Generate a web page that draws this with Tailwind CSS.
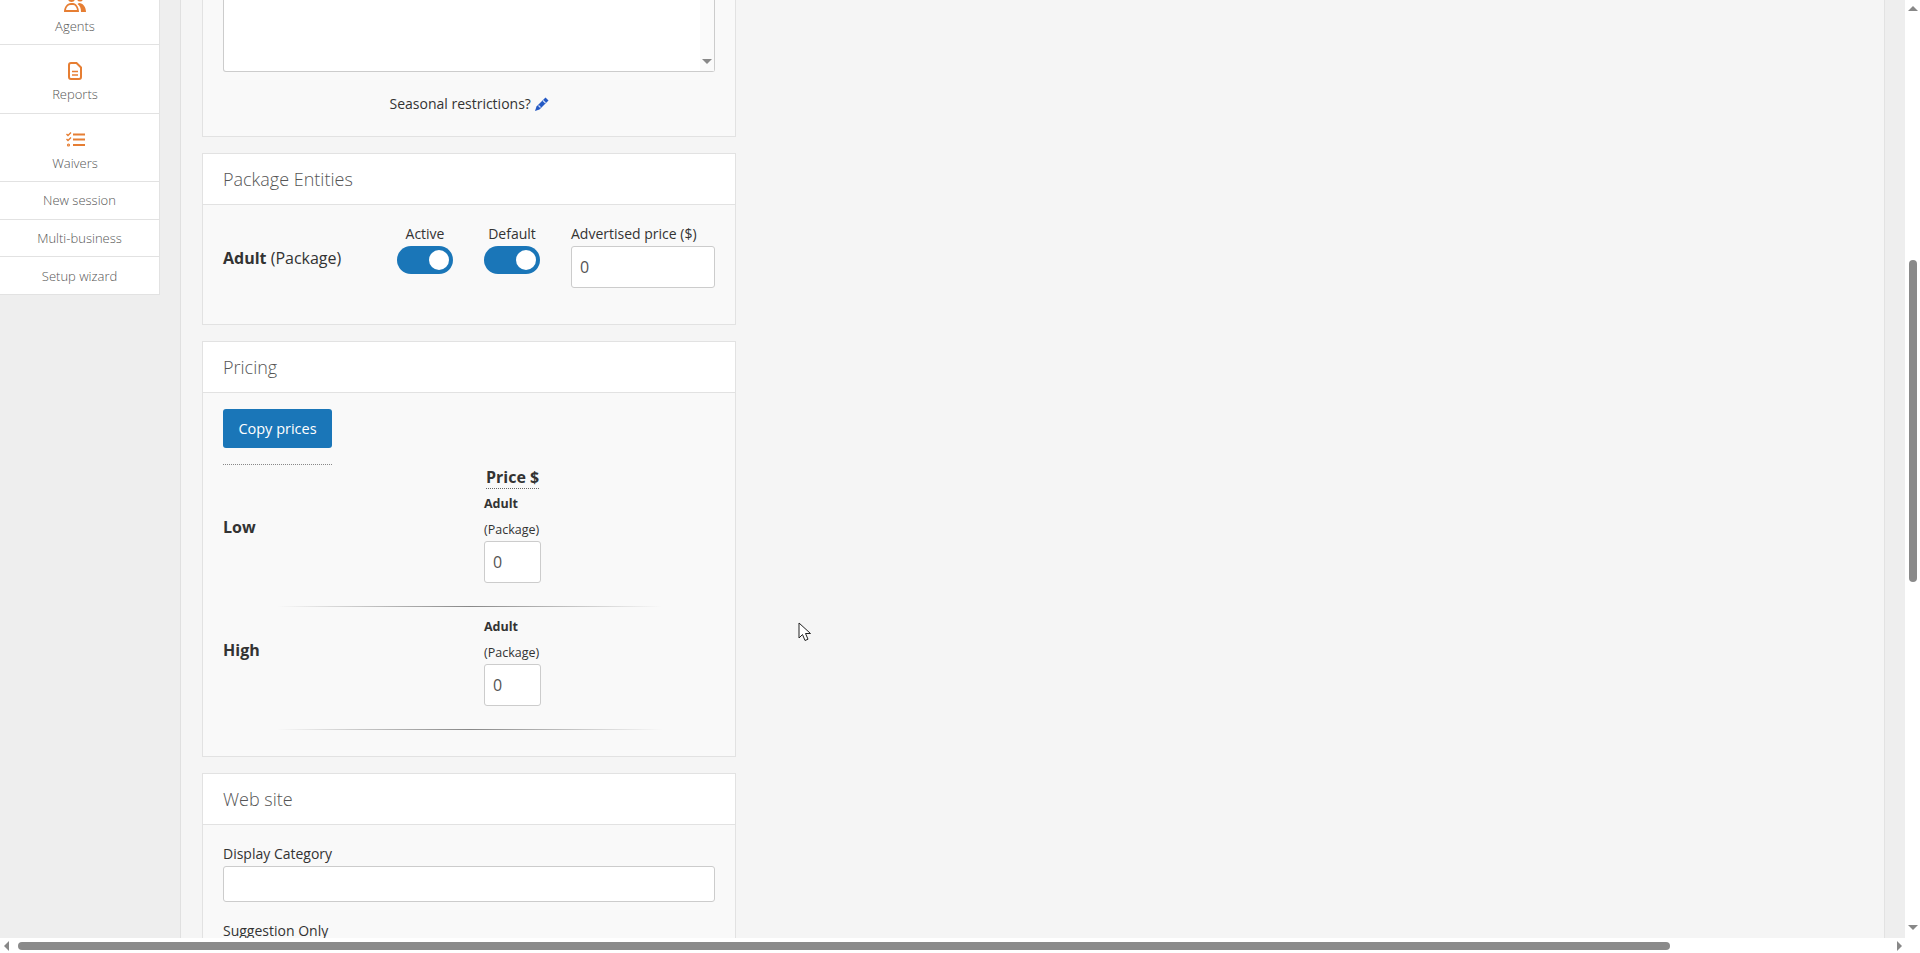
<!DOCTYPE html>
<html lang="en">
<head>
  <meta charset="UTF-8" />
  <title>Package</title>
  <script src="https://cdn.jsdelivr.net/npm/@tailwindcss/browser@4"></script>
</head>
<body class="bg-white h-[953px] w-[1920px] overflow-hidden font-['Open_Sans',sans-serif] text-[#333] text-sm">

  <div class="flex h-[953px]">
    <div class="w-[1905px] flex flex-col">

      <div class="h-[938px] flex overflow-hidden">

        <!-- Sidebar -->
        <div class="w-[181px] shrink-0 bg-[#eeeeee] border-r border-[#e0e0e0]">
          <ul class="w-[160px] bg-white border-r border-b border-[#e2e2e2] text-[#555] text-[13px] font-light text-center">
            <li class="h-[45px] border-b border-[#e2e2e2] relative overflow-hidden">
              <svg class="absolute left-[64px] top-[-8px] w-[22px] h-[20px]" viewBox="0 0 22 20" fill="#e67e33"><circle cx="7.500" cy="6.500" r="3.500"/><circle cx="16" cy="6.500" r="3"/><path fill-rule="evenodd" d="M0 20c0-5 3-9 7-9h2c3 0 6 4 6 9zM2 18h11c-.3-3-2-5-4-5H7c-3 0-4.700 2-5 5z"/><path d="M15 11c4 0 7 4 7 9h-5c0-4-1-6-3.500-8z"/></svg>
              <span class="absolute left-0 w-[150px] top-[17px]">Agents</span>
            </li>
            <li class="h-[69px] border-b border-[#e2e2e2] pt-[17px] flex flex-col items-center pr-[9px]">
              <svg class="w-[14px] h-[18px]" viewBox="0 0 14 18" fill="none" stroke="#e67e33" stroke-width="2"><path d="M1 3a2 2 0 0 1 2-2h5.500L13 5.500V15a2 2 0 0 1-2 2H3a2 2 0 0 1-2-2z"/><path d="M4 9.500h6M4 13h6" stroke-width="1.600"/></svg>
              <span class="mt-[5px]">Reports</span>
            </li>
            <li class="h-[68px] border-b border-[#e2e2e2] pt-[18px] flex flex-col items-center pr-[9px]">
              <svg class="w-[19px] h-[15px]" viewBox="0 0 19 15" fill="none" stroke="#e67e33" stroke-width="2"><path d="M7 2.500h12M7 7.500h12M7 13h12"/><path d="M.5 2l1.500 1.500L5 .5M.5 7l1.500 1.500L5 5.500" stroke-width="1.400"/><circle cx="2.500" cy="13" r="1" stroke-width="1.200"/></svg>
              <span class="mt-[7px]">Waivers</span>
            </li>
            <li class="h-[38px] border-b border-[#e2e2e2] leading-[37px]">New session</li>
            <li class="h-[37px] border-b border-[#e2e2e2] leading-[37px]">Multi-business</li>
            <li class="h-[37px] leading-[38px]">Setup wizard</li>
          </ul>
        </div>

        <!-- Content -->
        <div class="w-[1703px] bg-[#f5f5f5] pl-[21px] relative">

          <!-- Restrictions card -->
          <div class="w-[534px] h-[137px] bg-[#f9f9f9] border border-t-0 border-[#e2e2e2] px-[20px] overflow-hidden">
            <div class="h-[72px] bg-white border border-[#cccccc] border-t-0 rounded-b-[3px] flex justify-end">
              <div class="w-[14px] bg-[#fafafa] flex items-end justify-center pb-[7px]">
                <div class="w-0 h-0 border-x-[5px] border-x-transparent border-t-[5px] border-t-[#888]"></div>
              </div>
            </div>
            <p class="mt-[22px] text-center leading-[20px]">Seasonal restrictions?
              <svg class="inline w-[14px] h-[14px] align-[-2px]" viewBox="0 0 14 14"><path fill="#2459c4" d="M10.500.5l3 3-9 9-4.500 1.500 1.500-4.500z"/><path fill="none" stroke="#cfdcf6" stroke-width="1.200" d="M8 3.500l2.500 2.500M3.500 8.500l2 2"/></svg>
            </p>
          </div>

          <!-- Package Entities -->
          <div class="w-[534px] h-[172px] mt-[16px] bg-[#f9f9f9] border border-[#e2e2e2]">
            <div class="h-[51px] bg-white border-b border-[#e2e2e2] px-[20px] font-light text-[18px] text-[#555] leading-[50px]">Package Entities</div>
            <div class="flex pl-[20px] pt-[20px]">
              <div class="w-[174px] pt-[21px] text-[16px] leading-[24px]"><b class="font-bold">Adult</b> (Package)</div>
              <div class="w-[56px] mr-[31px] text-center">
                <div class="leading-[18px] mb-[3px]">Active</div>
                <div class="w-[56px] h-[28px] bg-[#1a76b8] rounded-full pl-[32px] pt-[4px]"><div class="w-[20px] h-[20px] bg-white rounded-full"></div></div>
              </div>
              <div class="w-[56px] mr-[31px] text-center">
                <div class="leading-[18px] mb-[3px]">Default</div>
                <div class="w-[56px] h-[28px] bg-[#1a76b8] rounded-full pl-[32px] pt-[4px]"><div class="w-[20px] h-[20px] bg-white rounded-full"></div></div>
              </div>
              <div>
                <div class="leading-[18px] mb-[3px] whitespace-nowrap">Advertised price ($)</div>
                <div class="w-[144px] h-[42px] bg-white border border-[#cccccc] rounded-[3px] pl-[8px] leading-[40px] text-[16px] text-[#555]">0</div>
              </div>
            </div>
          </div>

          <!-- Pricing -->
          <div class="w-[534px] h-[416px] mt-[16px] bg-[#f9f9f9] border border-[#e2e2e2]">
            <div class="h-[51px] bg-white border-b border-[#e2e2e2] px-[20px] font-light text-[18px] text-[#555] leading-[50px]">Pricing</div>
            <div class="px-[20px] pt-[16px]">
              <button class="h-[39px] block w-[109px] pt-[2px] bg-[#1a76b8] text-white rounded-[3px] text-[14.500px]">Copy prices</button>
              <div class="w-[109px] mt-[16px] border-t border-dotted border-[#888]"></div>

              <div class="pl-[261px] h-[24px] pt-[1px]">
                <span class="inline-block border-b border-dotted border-[#666] text-[16px] font-bold leading-[22px] ml-[2px]">Price $</span>
              </div>

              <div class="flex h-[116px] mt-[1px]">
                <div class="w-[261px] pt-[25px] text-[16px] font-bold leading-[24px]">Low</div>
                <div class="pt-[1px]">
                  <div class="text-[12.5px] font-bold leading-[26px]">Adult</div>
                  <div class="text-[12.5px] leading-[26px] -mb-[2px]">(Package)</div>
                  <div class="w-[57px] h-[42px] bg-white border border-[#cccccc] rounded-[3px] pl-[8px] leading-[40px] text-[16px] text-[#555]">0</div>
                </div>
              </div>
              <div class="h-[1px] w-[385px] mx-auto bg-linear-to-r from-transparent via-[#888] to-transparent"></div>

              <div class="flex h-[122px]">
                <div class="w-[261px] pt-[31px] text-[16px] font-bold leading-[24px]">High</div>
                <div class="pt-[7px]">
                  <div class="text-[12.5px] font-bold leading-[26px]">Adult</div>
                  <div class="text-[12.5px] leading-[26px] -mb-[2px]">(Package)</div>
                  <div class="w-[57px] h-[42px] bg-white border border-[#cccccc] rounded-[3px] pl-[8px] leading-[40px] text-[16px] text-[#555]">0</div>
                </div>
              </div>
              <div class="h-[1px] w-[385px] mx-auto bg-linear-to-r from-transparent via-[#888] to-transparent"></div>
            </div>
          </div>

          <!-- Web site -->
          <div class="w-[534px] h-[300px] mt-[16px] bg-[#f9f9f9] border border-[#e2e2e2]">
            <div class="h-[51px] bg-white border-b border-[#e2e2e2] px-[20px] font-light text-[18px] text-[#555] leading-[50px]">Web site</div>
            <div class="px-[20px] pt-[19px]">
              <div class="leading-[20px] mb-[2px]">Display Category</div>
              <div class="h-[36px] bg-white border border-[#cccccc] rounded-[3px]"></div>
              <div class="leading-[20px] mt-[19px]">Suggestion Only</div>
            </div>
          </div>

          <!-- Cursor -->
          <svg class="absolute left-[617px] top-[622px] w-[14px] h-[21px]" viewBox="0 0 14 21" fill="#fff" stroke="#222" stroke-width="1"><path d="M1 1v15l3.500-3.500 2.500 6 3-1.300-2.500-5.700H12.500z"/></svg>
        </div>

        <div class="w-[21px] shrink-0 bg-[#eeeeee] border-l border-[#e2e2e2]"></div>
      </div>

      <!-- Horizontal scrollbar -->
      <div class="h-[15px] flex items-center pl-[4px]">
        <div class="w-0 h-0 border-y-[5px] border-y-transparent border-r-[5px] border-r-[#888]"></div>
        <div class="w-[1652px] h-[8px] ml-[9px] rounded-full bg-[#8a8a8a]"></div>
        <div class="w-0 h-0 border-y-[5px] border-y-transparent border-l-[5px] border-l-[#888] ml-[227px]"></div>
      </div>
    </div>

    <!-- Vertical scrollbar -->
    <div class="w-[15px] flex flex-col items-center">
      <div class="w-0 h-0 mt-[6px] border-x-[5px] border-x-transparent border-b-[5px] border-b-[#888]"></div>
      <div class="w-[8px] h-[322px] mt-[249px] rounded-full bg-[#8a8a8a]"></div>
      <div class="w-0 h-0 mt-[343px] border-x-[5px] border-x-transparent border-t-[5px] border-t-[#888]"></div>
    </div>
  </div>

</body>
</html>
